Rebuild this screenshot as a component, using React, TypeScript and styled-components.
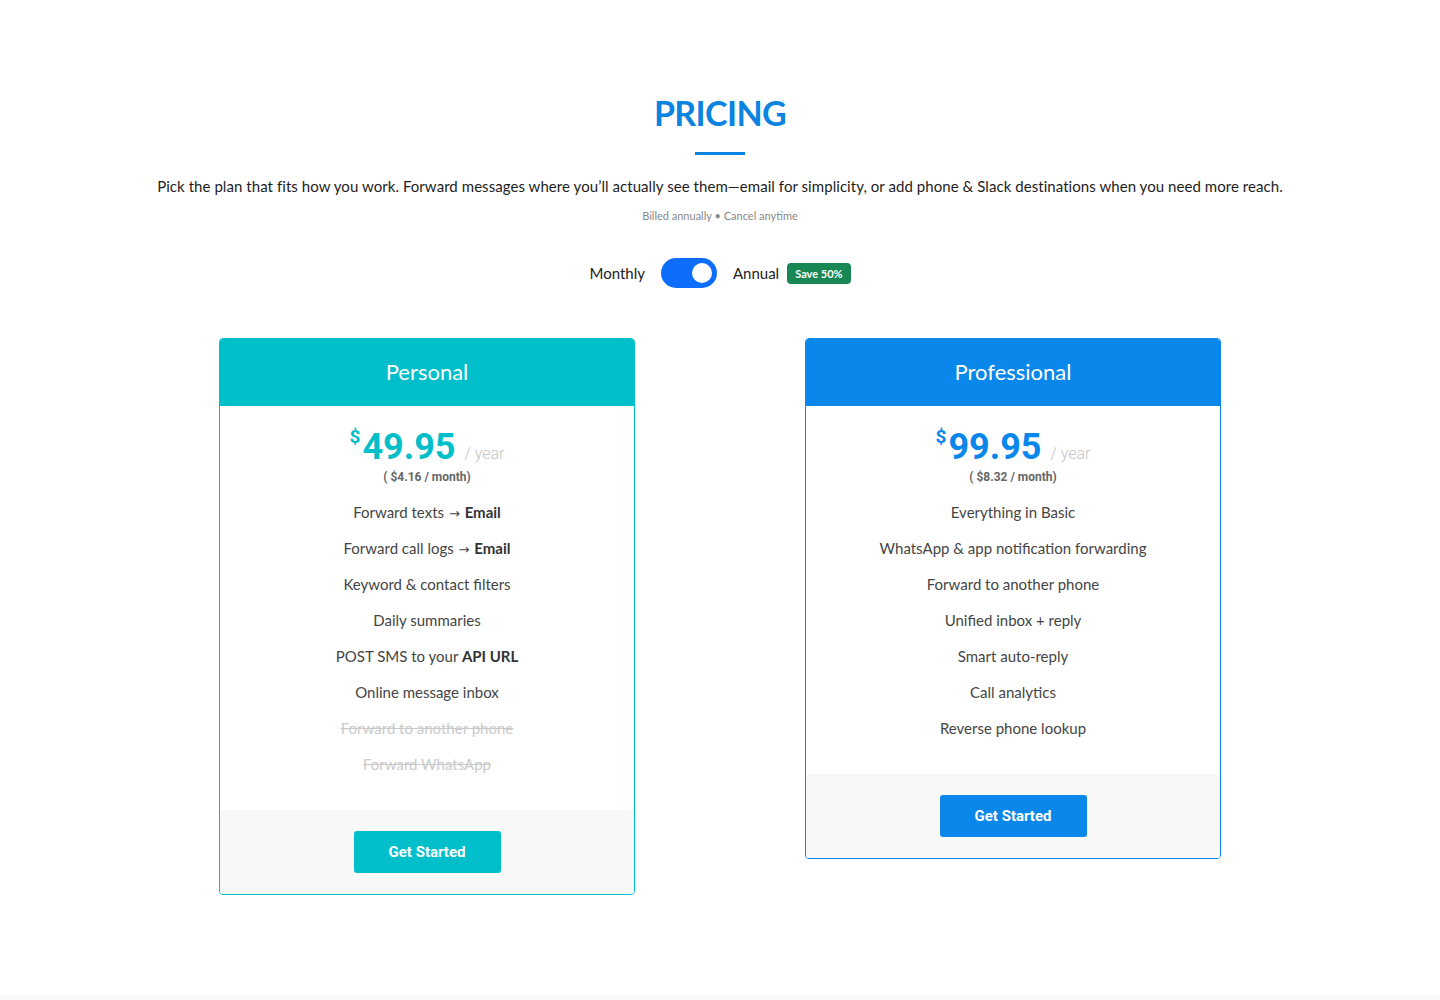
import React, { FunctionComponent, ReactNode } from 'react';
import styled, { createGlobalStyle } from 'styled-components';

const BODY_FONT = '"Lato", "Liberation Sans", sans-serif';
const NUM_FONT = 'Roboto, "Liberation Sans", sans-serif';

const TEAL = '#00bfca';
const BLUE = '#0a87ea';
const TITLE_BLUE = '#0b84e0';

const GlobalStyle = createGlobalStyle`
  html, body {
    margin: 0;
    padding: 0;
    background: #fff;
  }
  body {
    font-family: ${BODY_FONT};
    color: #222;
  }
  * {
    box-sizing: border-box;
  }
`;

const Page = styled.div`
  min-height: 1000px;
  display: flex;
  flex-direction: column;
`;

const Section = styled.section`
  padding: 92px 0 100px;
  display: flex;
  flex-direction: column;
  align-items: center;
`;

const Title = styled.h2`
  margin: 0;
  font-family: ${BODY_FONT};
  font-size: 34px;
  line-height: 42px;
  font-weight: 700;
  color: ${TITLE_BLUE};
  letter-spacing: -0.6px;
`;

const TitleBar = styled.div`
  margin-top: 18px;
  width: 50px;
  height: 3px;
  background: ${TITLE_BLUE};
`;

const Lead = styled.p`
  margin: 20px 0 0;
  font-size: 15px;
  line-height: 22px;
  letter-spacing: 0.06px;
  color: #1e1e1e;
  text-align: center;
`;

const Note = styled.p`
  margin: 11px 0 0;
  font-size: 11px;
  line-height: 16px;
  color: #888;
`;

const ToggleRow = styled.div`
  margin-top: 34px;
  height: 30px;
  display: flex;
  align-items: center;
  gap: 16px;
  font-size: 15px;
  color: #222;
`;

const Switch = styled.span<{ on: boolean }>`
  position: relative;
  display: inline-block;
  width: 56px;
  height: 30px;
  border-radius: 15px;
  background: ${({ on }) => (on ? '#0d6efd' : '#ccc')};

  &:after {
    content: '';
    position: absolute;
    top: 5px;
    left: ${({ on }) => (on ? '31px' : '5px')};
    width: 20px;
    height: 20px;
    border-radius: 50%;
    background: #fff;
  }
`;

const AnnualLabel = styled.span`
  display: inline-flex;
  align-items: center;
  gap: 8px;
`;

const Badge = styled.span`
  display: inline-flex;
  align-items: center;
  height: 21px;
  padding: 0 8px;
  border-radius: 4px;
  background: #198754;
  color: #fff;
  font-size: 11px;
  font-weight: 700;
`;

const Cards = styled.div`
  margin-top: 50px;
  display: flex;
  align-items: flex-start;
  justify-content: center;
  gap: 170px;
`;

const Card = styled.div<{ accent: string }>`
  width: 416px;
  border: 1px solid ${({ accent }) => accent};
  border-radius: 4px;
  overflow: hidden;
  background: #fff;
`;

const CardHeader = styled.div<{ accent: string }>`
  height: 68px;
  margin: -1px -1px 0;
  padding-bottom: 2px;
  display: flex;
  align-items: center;
  justify-content: center;
  background: ${({ accent }) => accent};
  color: #fff;
  font-size: 22px;
  font-weight: 400;
`;

const CardBody = styled.div`
  padding: 23px 0 28px;
  display: flex;
  flex-direction: column;
  align-items: center;
`;

const PriceRow = styled.div<{ accent: string }>`
  display: flex;
  align-items: flex-start;
  font-family: ${NUM_FONT};
  color: ${({ accent }) => accent};
  height: 36px;
`;

const Currency = styled.span`
  font-size: 19px;
  font-weight: 700;
  line-height: 19px;
  margin-top: -2px;
  margin-right: 2px;
`;

const Amount = styled.span`
  font-size: 36px;
  font-weight: 700;
  line-height: 36px;
`;

const Period = styled.span`
  align-self: flex-end;
  margin: 0 0 -1px 9px;
  font-size: 16px;
  font-weight: 300;
  line-height: 24px;
  color: #c4c4c4;
`;

const Monthly = styled.div`
  margin-top: 4px;
  font-family: ${NUM_FONT};
  font-size: 12px;
  font-weight: 700;
  line-height: 16px;
  color: #666;
`;

const Features = styled.ul`
  list-style: none;
  margin: 9px 0 0;
  padding: 0;
  width: 100%;
`;

const Feature = styled.li<{ off?: boolean }>`
  height: 36px;
  line-height: 36px;
  text-align: center;
  font-size: 15px;
  color: ${({ off }) => (off ? '#cacaca' : '#454545')};
  text-decoration: ${({ off }) => (off ? 'line-through' : 'none')};

  b {
    color: #333;
    font-weight: 700;
  }
`;

const Arrow = styled.span`
  font-family: "DejaVu Sans", sans-serif;
  font-size: 13px;
  margin: 0 1px;
`;

const CardFooter = styled.div`
  padding: 21px 0;
  display: flex;
  justify-content: center;
  background: #f8f8f8;
`;

const Button = styled.button<{ accent: string }>`
  width: 147px;
  height: 42px;
  border: 0;
  border-radius: 3px;
  background: ${({ accent }) => accent};
  color: #fff;
  font-family: ${NUM_FONT};
  font-size: 15px;
  font-weight: 700;
  cursor: pointer;
`;

const NextSection = styled.div`
  flex: 1;
  background: #f9f9fd;
  min-height: 6px;
`;

type FeatureItem = { text: ReactNode; off?: boolean };

type PlanProps = {
  name: string;
  accent: string;
  price: string;
  perMonth: string;
  features: FeatureItem[];
};

const Plan: FunctionComponent<PlanProps> = ({ name, accent, price, perMonth, features }) => (
  <Card accent={accent}>
    <CardHeader accent={accent}>{name}</CardHeader>
    <CardBody>
      <PriceRow accent={accent}>
        <Currency>$</Currency>
        <Amount>{price}</Amount>
        <Period>/ year</Period>
      </PriceRow>
      <Monthly>( ${perMonth} / month)</Monthly>
      <Features>
        {features.map((f, i) => (
          <Feature key={i} off={f.off}>
            {f.text}
          </Feature>
        ))}
      </Features>
    </CardBody>
    <CardFooter>
      <Button accent={accent}>Get Started</Button>
    </CardFooter>
  </Card>
);

const personal: FeatureItem[] = [
  { text: <>Forward texts <Arrow>→</Arrow> <b>Email</b></> },
  { text: <>Forward call logs <Arrow>→</Arrow> <b>Email</b></> },
  { text: 'Keyword & contact filters' },
  { text: 'Daily summaries' },
  { text: <>POST SMS to your <b>API URL</b></> },
  { text: 'Online message inbox' },
  { text: 'Forward to another phone', off: true },
  { text: 'Forward WhatsApp', off: true },
];

const professional: FeatureItem[] = [
  { text: 'Everything in Basic' },
  { text: 'WhatsApp & app notification forwarding' },
  { text: 'Forward to another phone' },
  { text: 'Unified inbox + reply' },
  { text: 'Smart auto-reply' },
  { text: 'Call analytics' },
  { text: 'Reverse phone lookup' },
];

export default function App() {
  return (
    <Page>
      <GlobalStyle />
      <Section>
        <Title>PRICING</Title>
        <TitleBar />
        <Lead>
          Pick the plan that fits how you work. Forward messages where you’ll actually see them—email for
          simplicity, or add phone &amp; Slack destinations when you need more reach.
        </Lead>
        <Note>Billed annually • Cancel anytime</Note>
        <ToggleRow>
          <span>Monthly</span>
          <Switch on />
          <AnnualLabel>
            Annual <Badge>Save 50%</Badge>
          </AnnualLabel>
        </ToggleRow>
        <Cards>
          <Plan name="Personal" accent={TEAL} price="49.95" perMonth="4.16" features={personal} />
          <Plan name="Professional" accent={BLUE} price="99.95" perMonth="8.32" features={professional} />
        </Cards>
      </Section>
      <NextSection />
    </Page>
  );
}
